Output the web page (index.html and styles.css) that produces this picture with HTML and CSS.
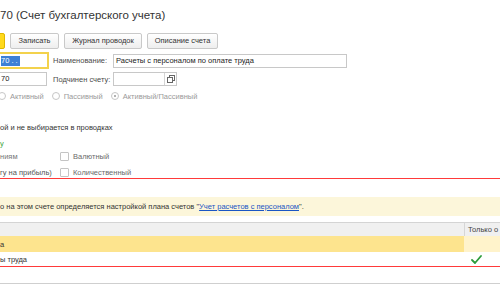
FILE: index.html
```html
<!DOCTYPE html>
<html lang="ru">
<head>
<meta charset="utf-8">
<title>Счет</title>
<link rel="stylesheet" href="styles.css">
</head>
<body>
<div class="page">
  <h1 class="title">70 (Счет бухгалтерского учета)</h1>

  <div class="toolbar">
    <button class="btn btn-primary"></button>
    <button class="btn btn-save">Записать</button>
    <button class="btn btn-journal">Журнал проводок</button>
    <button class="btn btn-desc">Описание счета</button>
  </div>

  <div class="form-row row-code">
    <div class="cell-code"><div class="input input-focus"><span class="sel">70 . .</span></div></div>
    <span class="label">Наименование:</span>
    <div class="input input-name">Расчеты с персоналом по оплате труда</div>
  </div>

  <div class="form-row row-parent">
    <div class="cell-code"><div class="input input-code">70</div></div>
    <span class="label">Подчинен счету:</span>
    <div class="input input-parent">
      <span class="field"></span>
      <span class="choose">
        <svg width="8" height="8" viewBox="0 0 8 8"><rect x="2.5" y="0.5" width="5" height="5" fill="none" stroke="#666" stroke-width="1"/><rect x="0.5" y="2.5" width="5" height="5" fill="#fff" stroke="#666" stroke-width="1"/></svg>
      </span>
    </div>
  </div>

  <div class="radios">
    <span class="radio radio-first"><i></i>Активный</span>
    <span class="radio"><i></i>Пассивный</span>
    <span class="radio radio-on"><i></i>Активный/Пассивный</span>
  </div>

  <div class="note">ой и не выбирается в проводках</div>
  <div class="green">у</div>

  <div class="checks">
    <span class="left left-light">ниям</span>
    <span class="check"><i></i>Валютный</span>
    <span class="left">гу на прибыль)</span>
    <span class="check"><i></i>Количественный</span>
  </div>

  <div class="redline"></div>

  <div class="info">о на этом счете определяется настройкой плана счетов "<a class="link" href="#">Учет расчетов с персоналом</a>".</div>

  <div class="grid">
    <div class="grid-row grid-head"><span></span><span class="last">Только о</span></div>
    <div class="grid-row row-selected"><span>а</span><span class="last"></span></div>
    <div class="grid-row row-red"><span>ы труда</span><span class="last"><svg width="11" height="9" viewBox="0 0 11 9"><path d="M1 5 L4 8 L10 1" fill="none" stroke="#2c9c3c" stroke-width="1.8" stroke-linecap="round" stroke-linejoin="round"/></svg></span></div>
    <div class="grid-row row-empty"><span></span><span class="last"></span></div>
  </div>
</div>
</body>
</html>
```

FILE: styles.css
```css
html, body {
  margin: 0;
  padding: 0;
}
body {
  width: 500px;
  height: 300px;
  overflow: hidden;
  background: #fff;
  font-family: "Liberation Sans", Arial, sans-serif;
  font-size: 7.5px;
  color: #333;
}
.page {
  display: flex;
  flex-direction: column;
}
.title {
  margin: 8px 0 0;
  font-size: 11.5px;
  line-height: 14px;
  font-weight: normal;
  color: #333;
  white-space: nowrap;
}
.toolbar {
  display: flex;
  gap: 5px;
  margin-top: 11px;
  height: 16px;
}
.btn {
  height: 16px;
  padding: 0;
  border: 1px solid #c9c9c9;
  border-radius: 2px;
  background: linear-gradient(#ffffff, #eeeeee);
  font-family: inherit;
  font-size: 7.5px;
  line-height: 14px;
  color: #333;
  box-sizing: border-box;
  white-space: nowrap;
  text-align: center;
}
.btn-primary {
  width: 14px;
  margin-left: -9px;
  background: #ffd91c;
  border-color: #e0b700;
}
.btn-save {
  width: 49px;
}
.btn-journal {
  width: 78px;
}
.btn-desc {
  width: 71px;
}
.form-row {
  display: grid;
  grid-template-columns: 53px 60px auto;
  align-items: center;
}
.row-code {
  margin-top: 3px;
  height: 17px;
}
.row-parent {
  margin-top: 3px;
  height: 14px;
}
.cell-code {
  display: flex;
}
.input {
  box-sizing: border-box;
  height: 14px;
  border: 1px solid #c8c8c8;
  background: #fff;
  display: flex;
  align-items: center;
  padding: 0 2px;
  line-height: 12px;
  color: #222;
  white-space: nowrap;
}
.input-focus {
  width: 51px;
  height: 17px;
  margin-left: -2px;
  border: 2px solid #f3d24c;
  padding: 0 0 0 1px;
}
.sel {
  background: #3d7fd6;
  color: #fff;
  padding: 0 2px 0 0;
  line-height: 10px;
}
.input-code {
  width: 48px;
  margin-left: -1px;
  padding-left: 1px;
}
.label {
  color: #4a4a4a;
  white-space: nowrap;
}
.input-name {
  width: 234px;
}
.input-parent {
  width: 64px;
  padding: 0;
}
.field {
  flex: 1;
  height: 100%;
  border-right: 1px solid #d4d4d4;
}
.choose {
  width: 11px;
  display: flex;
  align-items: center;
  justify-content: center;
}
.radios {
  display: flex;
  gap: 8px;
  margin-top: 5px;
  height: 10px;
  align-items: center;
}
.radio {
  display: flex;
  align-items: center;
  gap: 4px;
  color: #9a9a9a;
}
.radio i {
  box-sizing: border-box;
  width: 8px;
  height: 8px;
  border: 1px solid #c6c6c6;
  border-radius: 50%;
  display: flex;
  align-items: center;
  justify-content: center;
}
.radio-first {
  margin-left: -2px;
}
.radio-on i::after {
  content: "";
  width: 2px;
  height: 2px;
  border-radius: 50%;
  background: #999;
}
.note {
  margin-top: 22px;
  line-height: 10px;
  color: #333;
}
.green {
  margin-top: 6px;
  line-height: 10px;
  color: #3aa53a;
}
.checks {
  display: grid;
  grid-template-columns: 60px auto;
  grid-auto-rows: 10px;
  row-gap: 6px;
  margin-top: 2px;
  align-items: center;
}
.left {
  color: #555;
  white-space: nowrap;
}
.left-light {
  color: #777;
}
.check {
  display: flex;
  align-items: center;
  gap: 4px;
  color: #6a6a6a;
}
.check i {
  box-sizing: border-box;
  width: 9px;
  height: 9px;
  border: 1px solid #c4c4c4;
  border-radius: 1px;
  background: #fff;
}
.redline {
  margin-top: 1px;
  height: 1px;
  background: #ff3a3a;
}
.info {
  margin-top: 18px;
  height: 19px;
  line-height: 19px;
  background: #fcf6da;
  color: #333;
  white-space: nowrap;
}
.link {
  color: #1a55c4;
  text-decoration: underline;
}
.grid {
  margin-top: 6px;
  display: flex;
  flex-direction: column;
}
.grid-row {
  display: grid;
  grid-template-columns: 464px 1fr;
  box-sizing: border-box;
}
.grid-row span {
  display: flex;
  align-items: center;
  white-space: nowrap;
  overflow: hidden;
}
.grid-row .last {
  border-left: 1px solid #d6d6d6;
  padding-left: 3px;
}
.grid-head {
  height: 14px;
  border-top: 1px solid #d4d4d4;
  background: #f0f0f0;
  color: #444;
}
.row-selected {
  height: 16px;
}
.row-selected span {
  background: #fde48e;
}
.row-selected .last {
  background: #fff3cb;
  border-left-color: #fff3cb;
}
.row-red {
  height: 15px;
  border-bottom: 1px solid #ff3a3a;
}
.row-red .last {
  border-left-color: transparent;
  padding-left: 6px;
}
.row-empty {
  height: 17px;
  border-bottom: 1px solid #cfcfcf;
}
.row-empty .last {
  border-left-color: transparent;
}
```
